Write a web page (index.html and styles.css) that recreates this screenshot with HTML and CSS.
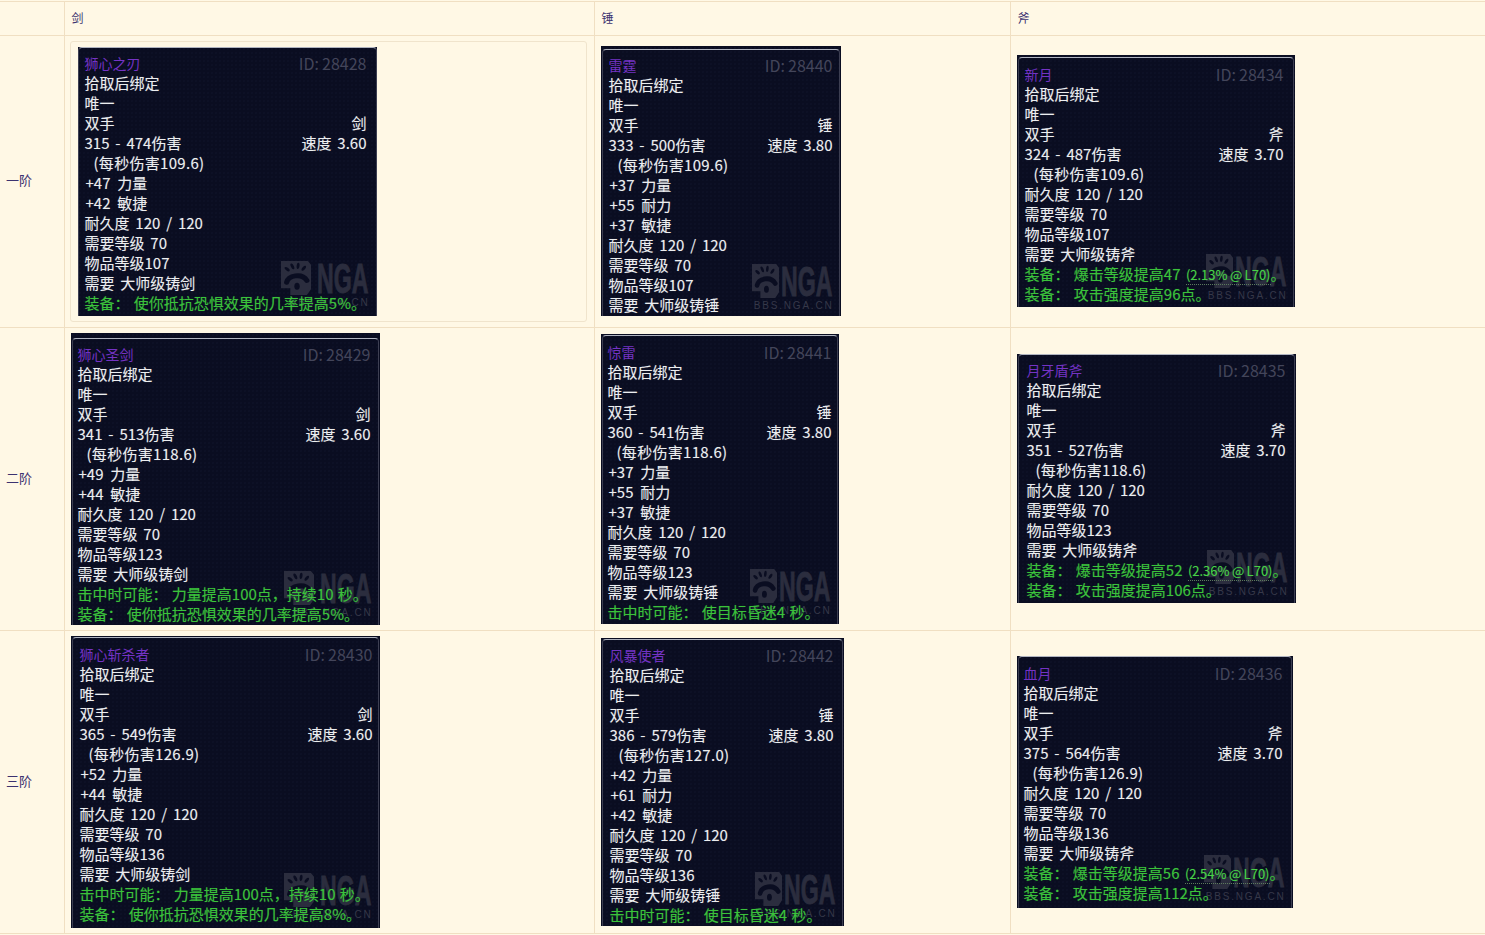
FILE: index.html
```html
<!DOCTYPE html>
<html lang="zh-CN">
<head>
<meta charset="utf-8">
<title>武器</title>
<link rel="stylesheet" href="styles.css">
</head>
<body>
<svg class="defs" width="0" height="0" aria-hidden="true">
  <symbol id="paw" viewBox="0 0 29 36" preserveAspectRatio="none">
    <path class="paw-block" d="M0 1H26L29 5V30L25 36H9V29H0Z"/>
    <g class="paw-cut">
      <ellipse cx="6" cy="9.5" rx="1.5" ry="3" transform="rotate(-50 6 9.5)"/>
      <ellipse cx="11" cy="6.5" rx="1.4" ry="3.2" transform="rotate(-25 11 6.5)"/>
      <ellipse cx="16.5" cy="6" rx="1.4" ry="3.2" transform="rotate(5 16.5 6)"/>
      <ellipse cx="22" cy="8.5" rx="1.5" ry="3" transform="rotate(35 22 8.5)"/>
      <path class="paw-arch" d="M5.5 23C7 16 20 13 25 21"/>
      <ellipse cx="15.5" cy="27" rx="2.6" ry="3.6"/>
    </g>
  </symbol>
</svg>
<table class="grid">
  <colgroup><col class="col-tier"><col class="col-sword"><col class="col-mace"><col class="col-axe"></colgroup>
  <tr class="head-row"><td></td><td>剑</td><td>锤</td><td>斧</td></tr>
  <tr>
    <td class="tier">一阶</td>
    <td>
      <div class="quote">
        <div class="card a1">
          <div class="line"><span class="name">狮心之刃</span><span class="id">ID: 28428</span></div>
          <div class="line">拾取后绑定</div>
          <div class="line">唯一</div>
          <div class="line"><span>双手</span><span>剑</span></div>
          <div class="line"><span>315 - 474伤害</span><span>速度 3.60</span></div>
          <div class="line dps">(每秒伤害109.6)</div>
          <div class="line stat">+47 力量</div>
          <div class="line stat">+42 敏捷</div>
          <div class="line">耐久度 120 / 120</div>
          <div class="line">需要等级 70</div>
          <div class="line">物品等级107</div>
          <div class="line">需要 大师级铸剑</div>
          <div class="line green">装备： 使你抵抗恐惧效果的几率提高5%。</div>
          <div class="mark"><div class="logo"><svg class="paw"><use href="#paw"/></svg><span class="nga">NGA</span></div><div class="bbs">BBS.NGA.CN</div></div>
        </div>
      </div>
    </td>
    <td>
      <div class="card b1">
        <div class="line"><span class="name">雷霆</span><span class="id">ID: 28440</span></div>
        <div class="line">拾取后绑定</div>
        <div class="line">唯一</div>
        <div class="line"><span>双手</span><span>锤</span></div>
        <div class="line"><span>333 - 500伤害</span><span>速度 3.80</span></div>
        <div class="line dps">(每秒伤害109.6)</div>
        <div class="line stat">+37 力量</div>
        <div class="line stat">+55 耐力</div>
        <div class="line stat">+37 敏捷</div>
        <div class="line">耐久度 120 / 120</div>
        <div class="line">需要等级 70</div>
        <div class="line">物品等级107</div>
        <div class="line">需要 大师级铸锤</div>
        <div class="mark"><div class="logo"><svg class="paw"><use href="#paw"/></svg><span class="nga">NGA</span></div><div class="bbs">BBS.NGA.CN</div></div>
      </div>
    </td>
    <td>
      <div class="card c1">
        <div class="line"><span class="name">新月</span><span class="id">ID: 28434</span></div>
        <div class="line">拾取后绑定</div>
        <div class="line">唯一</div>
        <div class="line"><span>双手</span><span>斧</span></div>
        <div class="line"><span>324 - 487伤害</span><span>速度 3.70</span></div>
        <div class="line dps">(每秒伤害109.6)</div>
        <div class="line">耐久度 120 / 120</div>
        <div class="line">需要等级 70</div>
        <div class="line">物品等级107</div>
        <div class="line">需要 大师级铸斧</div>
        <div class="line green">装备： 爆击等级提高47 <span class="rate">(2.13% @ L70)</span>。</div>
        <div class="line green">装备： 攻击强度提高96点。</div>
        <div class="mark"><div class="logo"><svg class="paw"><use href="#paw"/></svg><span class="nga">NGA</span></div><div class="bbs">BBS.NGA.CN</div></div>
      </div>
    </td>
  </tr>
  <tr>
    <td class="tier">二阶</td>
    <td>
      <div class="card a2">
        <div class="line"><span class="name">狮心圣剑</span><span class="id">ID: 28429</span></div>
        <div class="line">拾取后绑定</div>
        <div class="line">唯一</div>
        <div class="line"><span>双手</span><span>剑</span></div>
        <div class="line"><span>341 - 513伤害</span><span>速度 3.60</span></div>
        <div class="line dps">(每秒伤害118.6)</div>
        <div class="line stat">+49 力量</div>
        <div class="line stat">+44 敏捷</div>
        <div class="line">耐久度 120 / 120</div>
        <div class="line">需要等级 70</div>
        <div class="line">物品等级123</div>
        <div class="line">需要 大师级铸剑</div>
        <div class="line green">击中时可能： 力量提高100点，持续10 秒。</div>
        <div class="line green">装备： 使你抵抗恐惧效果的几率提高5%。</div>
        <div class="mark"><div class="logo"><svg class="paw"><use href="#paw"/></svg><span class="nga">NGA</span></div><div class="bbs">BBS.NGA.CN</div></div>
      </div>
    </td>
    <td>
      <div class="card b2">
        <div class="line"><span class="name">惊雷</span><span class="id">ID: 28441</span></div>
        <div class="line">拾取后绑定</div>
        <div class="line">唯一</div>
        <div class="line"><span>双手</span><span>锤</span></div>
        <div class="line"><span>360 - 541伤害</span><span>速度 3.80</span></div>
        <div class="line dps">(每秒伤害118.6)</div>
        <div class="line stat">+37 力量</div>
        <div class="line stat">+55 耐力</div>
        <div class="line stat">+37 敏捷</div>
        <div class="line">耐久度 120 / 120</div>
        <div class="line">需要等级 70</div>
        <div class="line">物品等级123</div>
        <div class="line">需要 大师级铸锤</div>
        <div class="line green">击中时可能： 使目标昏迷4 秒。</div>
        <div class="mark"><div class="logo"><svg class="paw"><use href="#paw"/></svg><span class="nga">NGA</span></div><div class="bbs">BBS.NGA.CN</div></div>
      </div>
    </td>
    <td>
      <div class="card c2">
        <div class="line"><span class="name">月牙盾斧</span><span class="id">ID: 28435</span></div>
        <div class="line">拾取后绑定</div>
        <div class="line">唯一</div>
        <div class="line"><span>双手</span><span>斧</span></div>
        <div class="line"><span>351 - 527伤害</span><span>速度 3.70</span></div>
        <div class="line dps">(每秒伤害118.6)</div>
        <div class="line">耐久度 120 / 120</div>
        <div class="line">需要等级 70</div>
        <div class="line">物品等级123</div>
        <div class="line">需要 大师级铸斧</div>
        <div class="line green">装备： 爆击等级提高52 <span class="rate">(2.36% @ L70)</span>。</div>
        <div class="line green">装备： 攻击强度提高106点。</div>
        <div class="mark"><div class="logo"><svg class="paw"><use href="#paw"/></svg><span class="nga">NGA</span></div><div class="bbs">BBS.NGA.CN</div></div>
      </div>
    </td>
  </tr>
  <tr>
    <td class="tier">三阶</td>
    <td>
      <div class="card a3">
        <div class="line"><span class="name">狮心斩杀者</span><span class="id">ID: 28430</span></div>
        <div class="line">拾取后绑定</div>
        <div class="line">唯一</div>
        <div class="line"><span>双手</span><span>剑</span></div>
        <div class="line"><span>365 - 549伤害</span><span>速度 3.60</span></div>
        <div class="line dps">(每秒伤害126.9)</div>
        <div class="line stat">+52 力量</div>
        <div class="line stat">+44 敏捷</div>
        <div class="line">耐久度 120 / 120</div>
        <div class="line">需要等级 70</div>
        <div class="line">物品等级136</div>
        <div class="line">需要 大师级铸剑</div>
        <div class="line green">击中时可能： 力量提高100点，持续10 秒。</div>
        <div class="line green">装备： 使你抵抗恐惧效果的几率提高8%。</div>
        <div class="mark"><div class="logo"><svg class="paw"><use href="#paw"/></svg><span class="nga">NGA</span></div><div class="bbs">BBS.NGA.CN</div></div>
      </div>
    </td>
    <td>
      <div class="card b3">
        <div class="line"><span class="name">风暴使者</span><span class="id">ID: 28442</span></div>
        <div class="line">拾取后绑定</div>
        <div class="line">唯一</div>
        <div class="line"><span>双手</span><span>锤</span></div>
        <div class="line"><span>386 - 579伤害</span><span>速度 3.80</span></div>
        <div class="line dps">(每秒伤害127.0)</div>
        <div class="line stat">+42 力量</div>
        <div class="line stat">+61 耐力</div>
        <div class="line stat">+42 敏捷</div>
        <div class="line">耐久度 120 / 120</div>
        <div class="line">需要等级 70</div>
        <div class="line">物品等级136</div>
        <div class="line">需要 大师级铸锤</div>
        <div class="line green">击中时可能： 使目标昏迷4 秒。</div>
        <div class="mark"><div class="logo"><svg class="paw"><use href="#paw"/></svg><span class="nga">NGA</span></div><div class="bbs">BBS.NGA.CN</div></div>
      </div>
    </td>
    <td>
      <div class="card c3">
        <div class="line"><span class="name">血月</span><span class="id">ID: 28436</span></div>
        <div class="line">拾取后绑定</div>
        <div class="line">唯一</div>
        <div class="line"><span>双手</span><span>斧</span></div>
        <div class="line"><span>375 - 564伤害</span><span>速度 3.70</span></div>
        <div class="line dps">(每秒伤害126.9)</div>
        <div class="line">耐久度 120 / 120</div>
        <div class="line">需要等级 70</div>
        <div class="line">物品等级136</div>
        <div class="line">需要 大师级铸斧</div>
        <div class="line green">装备： 爆击等级提高56 <span class="rate">(2.54% @ L70)</span>。</div>
        <div class="line green">装备： 攻击强度提高112点。</div>
        <div class="mark"><div class="logo"><svg class="paw"><use href="#paw"/></svg><span class="nga">NGA</span></div><div class="bbs">BBS.NGA.CN</div></div>
      </div>
    </td>
  </tr>
</table>
</body>
</html>
```
FILE: styles.css
```css
html, body { margin: 0; padding: 0; background: #fff8e5; }
body { padding-top: 1px; font-family: "Noto Sans CJK SC", "Liberation Sans", sans-serif; color: #3c3270; font-size: 12px; }
.defs { position: absolute; }
.grid { width: 1485px; table-layout: fixed; border-collapse: collapse; }
.col-tier { width: 64px; }
.col-sword { width: 530px; }
.col-mace { width: 416px; }
.col-axe { width: 475px; }
.grid td { border: 1px solid #f0dfc2; padding: 5px 6px; vertical-align: middle; }
.grid tr td:first-child { border-left: 0; }
.grid tr td:last-child { border-right: 0; }
.head-row td { height: 23px; font-size: 12px; padding: 4px 6px 6px 7px; line-height: 23px; }
.grid .tier { font-size: 13px; padding: 1px 6px 5px 6px; }
.quote { margin-left: -1px; border: 1px solid #f0e4cc; border-radius: 3px; padding: 5px 8px 5px 7px; width: 500px; }

.card { --top: 8px; --left: 7px; --right: 10px; --ft: 1px; --mark: 6px; --fl: 1px; position: relative; box-sizing: border-box; overflow: hidden; padding: var(--top) var(--right) 0 var(--left); background-color: #0a0d21; background-image: radial-gradient(#11142a 0.6px, transparent 0.8px); background-size: 4px 4px; color: #eceef0; font-size: 15px; line-height: 20px; text-shadow: 0 0 1px rgba(255, 255, 255, 0.3); word-spacing: 2.5px; }
.card::before { content: ""; position: absolute; top: var(--ft); left: var(--fl); right: var(--fl); bottom: -6px; border: 1px solid #3d3f52; border-top-color: #b0b4c0; border-radius: 4px; }
.a1 { width: 299px; height: 269px; --top: 6px; --left: 7px; --ft: 0px; --fl: 0px; --mark: 7px; }
.b1 { width: 240px; height: 270px; margin-bottom: 1px; --top: 9px; --left: 8px; --ft: 3px; --right: 8px; --mark: 4px; }
.c1 { width: 278px; height: 252px; margin-bottom: 1px; --top: 9px; --left: 8px; --ft: 2px; --right: 11px; --mark: 5px; }
.a2 { width: 309px; height: 292px; --top: 11px; --right: 9px; --ft: 5px; --mark: 6px; }
.b2 { width: 238px; height: 290px; --right: 7px; --ft: 1px; --mark: 7px; }
.c2 { width: 279px; height: 249px; margin-bottom: 1px; --top: 6px; --left: 10px; --ft: 0px; --mark: 5px; }
.a3 { width: 309px; height: 292px; --top: 8px; --left: 9px; --right: 7px; --ft: 1px; --mark: 7px; }
.b3 { width: 243px; height: 288px; --top: 7px; --left: 9px; --ft: 1px; --mark: 6px; }
.c3 { width: 276px; height: 252px; --top: 7px; --left: 7px; --ft: 0px; --mark: 5px; }

.line { position: relative; z-index: 1; display: flex; justify-content: space-between; white-space: pre; height: 20px; }
.dps { padding-left: 9px; letter-spacing: 0.3px; }
.stat { padding-left: 1px; word-spacing: 3.5px; }
.name { color: #7433c4; font-size: 14px; text-shadow: none; }
.id { color: #43455a; font-size: 16px; text-shadow: none; word-spacing: -0.5px; }
.green { display: block; color: #3bc23b; text-shadow: 0 0 1px rgba(60, 200, 60, 0.4); word-spacing: 1px; }
.rate { font-size: 13px; word-spacing: -0.5px; color: #47d147; border-bottom: 1px dotted #5c7a5c; margin-left: 1px; }

.mark { position: absolute; right: 9px; bottom: var(--mark); width: 92px; color: #2b2d3e; }
.logo { display: flex; justify-content: flex-end; align-items: flex-end; height: 36px; }
.paw { width: 27px; height: 35px; flex: none; margin-right: 2px; }
.a1 .paw, .a2 .paw, .a3 .paw { width: 30px; margin-right: 6px; }
.paw-block { fill: #2b2d3e; }
.paw-cut { fill: #0a0d21; }
.paw-arch { fill: none; stroke: #0a0d21; stroke-width: 5; stroke-linecap: round; }
.nga { flex: none; width: 51px; height: 30px; margin-bottom: 1px; font-family: "Liberation Sans", sans-serif; font-weight: 700; font-size: 42px; line-height: 30px; -webkit-text-stroke: 1px #2b2d3e; word-spacing: 0; white-space: nowrap; transform: scaleX(0.55); transform-origin: left bottom; text-shadow: none; }
.bbs { font-family: "Liberation Sans", sans-serif; font-size: 10px; line-height: 12px; letter-spacing: 1.8px; text-align: right; margin-right: -2px; margin-top: 2px; color: #363849; white-space: nowrap; word-spacing: 0; text-shadow: none; }
```
